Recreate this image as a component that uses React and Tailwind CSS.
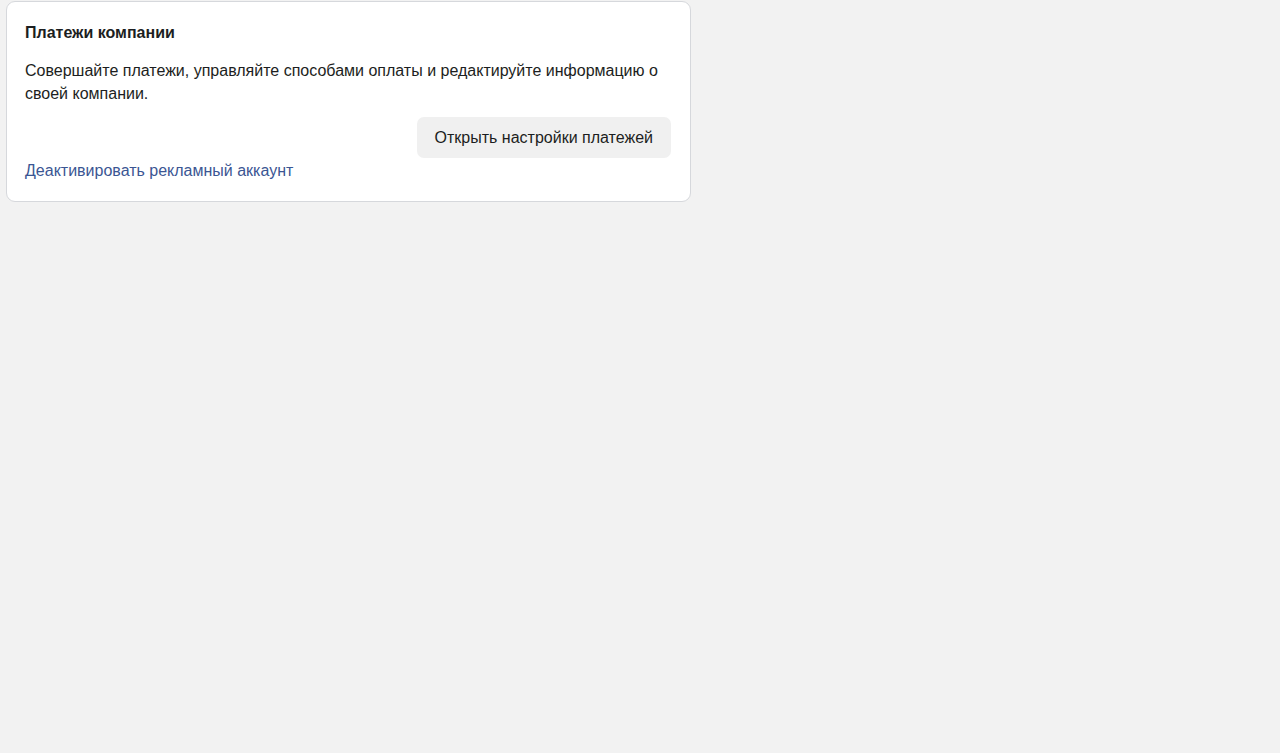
export default function App() {
  return (
    <div className="min-h-[753px] bg-[#f2f2f2] pt-[1px] pl-[6px]" style={{ fontFamily: '"Liberation Sans", Arial, sans-serif' }}>
      <div className="w-[685px] rounded-[9px] border border-[#d6d8dc] bg-white pl-[18px] pr-[19px] pt-[21px] pb-[20px]">
        <h2 className="text-[16px] leading-[20px] font-bold text-[#1c1e21]">Платежи компании</h2>
        <p className="mt-[16px] text-[16px] leading-[23px] text-[#1c1e21]">
          Совершайте платежи, управляйте способами оплаты и редактируйте информацию о своей компании.
        </p>
        <div className="mt-[12px] flex justify-end">
          <button className="h-[41px] rounded-[7px] bg-[#f0f0f0] px-[18px] text-[16px] text-[#1c1e21]">
            Открыть настройки платежей
          </button>
        </div>
        <a href="#" className="mt-[3px] block text-[16px] leading-[20px] text-[#3b5693]">
          Деактивировать рекламный аккаунт
        </a>
      </div>
    </div>
  );
}
